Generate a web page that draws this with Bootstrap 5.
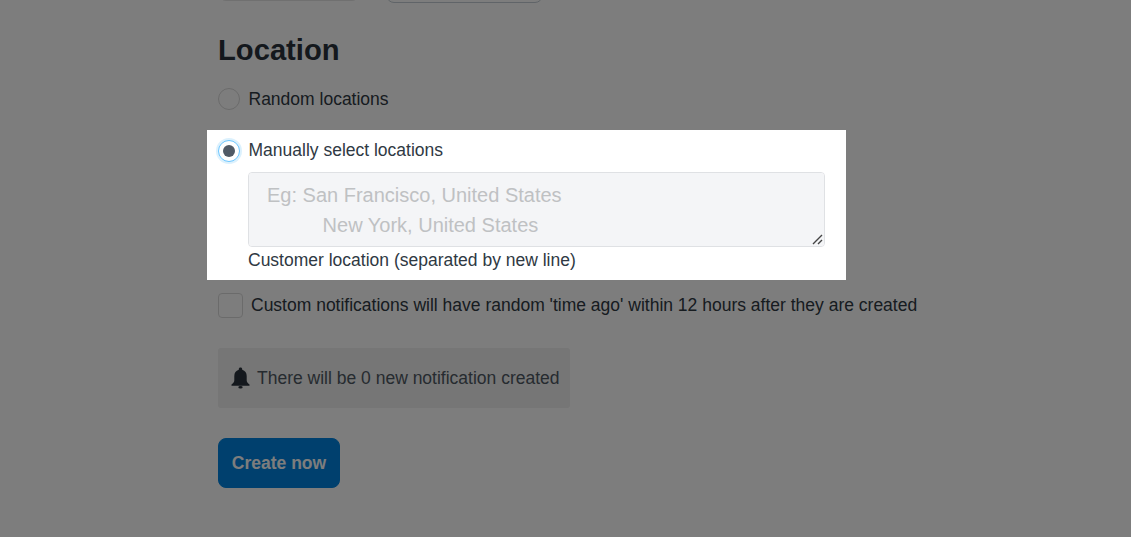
<!DOCTYPE html>
<html lang="en">
<head>
<meta charset="utf-8">
<title>Location</title>
<link rel="stylesheet" href="https://cdn.jsdelivr.net/npm/bootstrap@5.3.0/dist/css/bootstrap.min.css">
<style>
html, body { height: 537px; overflow: hidden; }
body { font-family: "Liberation Sans", Arial, sans-serif; color: #2f3943; font-size: 17.5px; background: #fff; position: relative; }
.dim-layer { position: absolute; inset: 0; background: rgba(0,0,0,.51); z-index: 5; }
.page-wrap { width: 730px; margin-left: 218px; margin-top: -33px; }
.tab-row { gap: 26px; height: 36px; align-items: flex-start; }
.tab-stub { width: 142px; height: 34px; border: 1px solid #e4e4e4; border-radius: 8px; background: #fff; }
.tab-stub-b { width: 157px; height: 36px; border-color: #c4cdd5; }
.loc-title { font-size: 29.200px; font-weight: 700; line-height: 34px; margin: 30px 0 0; color: #2a323b; }
.opt-row { gap: 8.500px; align-items: center; line-height: 22px; }
.opt-random { margin-top: 20px; height: 24px; }
.radio-mark { width: 22px; height: 22px; border-radius: 50%; border: 1px solid #dadada; background: #fff; flex: none; }
.focus-panel { position: relative; z-index: 10; background: #fff; margin: 19px 0 0 -11px; width: 639px; height: 150px; padding: 10px 0 0 11px; }
.radio-on { width: 22px; height: 22px; border-radius: 50%; border: 1.500px solid #6cc6ff; box-shadow: 0 0 0 2px #dcf1fd; background: #fff; flex: none; display: flex; align-items: center; justify-content: center; }
.radio-on i { display: block; width: 12px; height: 12px; border-radius: 50%; background: #505a66; }
.raise-label { line-height: 20px; align-self: flex-start; }
.panel-body { margin-left: 30px; width: 577px; }
.input-holder { position: relative; margin-top: 10px; height: 75px; }
.loc-input { display: block; width: 577px; height: 75px; padding: 7px 18px; font-size: 20px; line-height: 30px; background: #f4f5f7; border: 1px solid #dfe1e4; border-radius: 4px; color: #212b36; resize: none; font-family: inherit; }
.loc-input::placeholder { color: #bfc1c3; opacity: 1; }
.grip-mark { position: absolute; right: 2px; bottom: 2px; width: 11px; height: 11px; pointer-events: none; }
.loc-hint { line-height: 22px; margin-top: 2px; }
.check-row { margin-top: 13px; gap: 8px; align-items: center; height: 25px; }
.check-box { width: 25px; height: 25px; border: 1px solid #dadada; border-radius: 4px; background: #fff; flex: none; }
.count-note { display: inline-flex; align-items: center; gap: 7px; width: 352px; height: 60px; margin-top: 30px; padding: 0 13px; background: #f0f0f0; border-radius: 3px; color: #4f5963; white-space: nowrap; }
.count-note svg { width: 19px; height: 22px; flex: none; }
.create-btn { display: block; margin-top: 30px; width: 122px; height: 50px; padding: 0; background: #0084e0; border: 1px solid #0084e0; color: #fff; font-weight: 700; font-size: 17.5px; border-radius: 8px; }
.create-btn:hover { background: #0084e0; border-color: #0084e0; color: #fff; }
</style>
</head>
<body>
<div class="page-wrap">
  <div class="d-flex tab-row">
    <div class="tab-stub"></div>
    <div class="tab-stub tab-stub-b"></div>
  </div>
  <h2 class="loc-title">Location</h2>
  <div class="d-flex opt-row opt-random"><span class="radio-mark"></span><span>Random locations</span></div>
  <div class="focus-panel">
    <div class="d-flex opt-row"><span class="radio-on"><i></i></span><span class="raise-label">Manually select locations</span></div>
    <div class="panel-body">
      <div class="input-holder">
        <textarea class="loc-input" placeholder="Eg: San Francisco, United States
          New York, United States"></textarea>
        <svg class="grip-mark" viewBox="0 0 11 11" aria-hidden="true"><path d="M1 10 L10 1 M6 10 L10 6" stroke="#444" stroke-width="1.400" fill="none"/></svg>
      </div>
      <div class="loc-hint">Customer location (separated by new line)</div>
    </div>
  </div>
  <div class="d-flex check-row"><span class="check-box"></span><span class="text-nowrap">Custom notifications will have random 'time ago' within 12 hours after they are created</span></div>
  <div class="count-note">
    <svg viewBox="0 0 19 22" aria-hidden="true"><path fill="#2a323b" d="M9.500 0.500c-1 0-1.700.7-1.700 1.700v.6C4.900 3.600 3.300 6 3.300 9v4.200c0 1.700-1 2.800-2.800 4.300v1.300h18v-1.300c-1.800-1.500-2.800-2.600-2.800-4.300V9c0-3-1.600-5.400-4.500-6.200v-.6c0-1-.7-1.700-1.700-1.700z"/><ellipse fill="#2a323b" cx="9.500" cy="20.300" rx="2.200" ry="1.300"/></svg>
    <span>There will be 0 new notification created</span>
  </div>
  <button type="button" class="btn create-btn">Create now</button>
</div>
<div class="dim-layer"></div>
<script src="https://cdn.jsdelivr.net/npm/bootstrap@5.3.0/dist/js/bootstrap.bundle.min.js"></script>
</body>
</html>
